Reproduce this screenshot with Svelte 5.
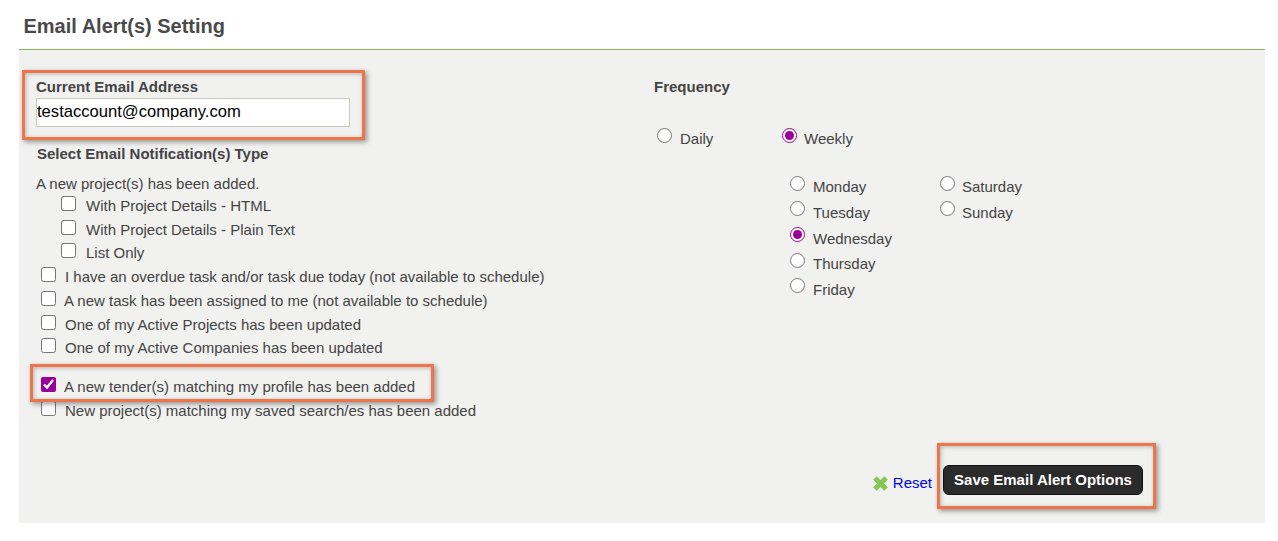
<script>
  const notifications = [
    { text: 'With Project Details - HTML', nested: true, gap: 0 },
    { text: 'With Project Details - Plain Text', nested: true, gap: 0 },
    { text: 'List Only', nested: true, gap: -1 },
    { text: 'I have an overdue task and/or task due today (not available to schedule)', gap: 0 },
    { text: 'A new task has been assigned to me (not available to schedule)', gap: 0, tight: true },
    { text: 'One of my Active Projects has been updated', gap: 0 },
    { text: 'One of my Active Companies has been updated', gap: -1 },
    { text: 'A new tender(s) matching my profile has been added', checked: true, gap: 15, tight: true },
    { text: 'New project(s) matching my saved search/es has been added', gap: 0 }
  ];
  const daysA = ['Monday', 'Tuesday', 'Wednesday', 'Thursday', 'Friday'];
  const daysB = ['Saturday', 'Sunday'];
</script>

<main class="page">
  <h1>Email Alert(s) Setting</h1>
  <section class="panel">
    <div class="left">
      <label class="strong" for="email">Current Email Address</label>
      <input id="email" type="text" value="testaccount@company.com" />
      <h2>Select Email Notification(s) Type</h2>
      <p class="lead">A new project(s) has been added.</p>
      <ul>
        {#each notifications as n}
          <li class:nested={n.nested} class:tight={n.tight} style="margin-top: {n.gap}px">
            <input type="checkbox" checked={n.checked} />
            <span>{n.text}</span>
          </li>
        {/each}
      </ul>
    </div>

    <div class="right">
      <div class="strong">Frequency</div>
      <div class="freq">
        <label class="opt daily"><input type="radio" name="freq" /><span>Daily</span></label>
        <label class="opt weekly"><input type="radio" name="freq" checked /><span>Weekly</span></label>
      </div>
      <div class="days">
        <div class="col">
          {#each daysA as d}
            <label class="opt"><input type="radio" name="day" checked={d === 'Wednesday'} /><span>{d}</span></label>
          {/each}
        </div>
        <div class="col second">
          {#each daysB as d}
            <label class="opt"><input type="radio" name="day2" /><span>{d}</span></label>
          {/each}
        </div>
      </div>
    </div>

    <div class="actions">
      <svg class="x" viewBox="0 0 14 14" width="15" height="15" aria-hidden="true">
        <path d="M0.6 3.4 3.4 0.6 7 4 10.6 0.6 13.4 3.4 10 7 13.4 10.6 10.6 13.4 7 10 3.4 13.4 0.6 10.6 4 7Z" fill="#86c654" stroke="#7ab84a" stroke-width="0.6" stroke-linejoin="round" />
      </svg>
      <a href="#reset">Reset</a>
      <button type="button">Save Email Alert Options</button>
    </div>

    <div class="mark m1"></div>
    <div class="mark m2"></div>
    <div class="mark m3"></div>
  </section>
</main>

<style>
  :global(body) {
    margin: 0;
    background: #fff;
  }
  .page {
    width: 1246px;
    margin-left: 19px;
    font-family: "Liberation Sans", Arial, sans-serif;
    color: #444;
    font-size: 15px;
  }
  h1 {
    margin: 0;
    height: 50px;
    box-sizing: border-box;
    padding: 14px 0 0 4.5px;
    font-size: 20px;
    line-height: 24px;
    font-weight: bold;
    color: #4a4a4a;
    border-bottom: 1px solid #7dba5a;
  }
  .panel {
    position: relative;
    height: 473px;
    background: #f1f1ef;
    display: grid;
    grid-template-columns: 635px 1fr;
  }
  .left {
    padding: 28px 0 0 17px;
  }
  .strong {
    display: block;
    font-weight: bold;
    font-size: 15px;
    line-height: 17px;
    color: #444;
  }
  #email {
    display: block;
    box-sizing: border-box;
    width: 314px;
    height: 29px;
    margin-top: 3px;
    padding: 0 0 2px;
    border: 1px solid #c8c8c0;
    background: #fff;
    color: #000;
    font: 16.6px "Liberation Sans", Arial, sans-serif;
    border-radius: 0;
  }
  h2 {
    margin: 18px 0 0 1px;
    font-size: 15px;
    line-height: 17px;
    font-weight: bold;
    color: #444;
  }
  .lead {
    margin: 13px 0 0;
    line-height: 17px;
  }
  ul {
    list-style: none;
    margin: -1px 0 0;
    padding: 0;
  }
  li {
    display: flex;
    align-items: center;
    height: 24px;
    padding-left: 5px;
    gap: 9px;
  }
  li.nested {
    padding-left: 25px;
    gap: 10px;
  }
  li.tight {
    gap: 8px;
  }
  li span {
    position: relative;
    top: 2px;
  }
  input[type="checkbox"],
  input[type="radio"] {
    width: 15px;
    height: 15px;
    margin: 0;
    flex: none;
    accent-color: #990099;
  }
  .right {
    padding: 28px 0 0 0;
  }
  .opt {
    display: flex;
    align-items: center;
    gap: 8px;
    height: 25.6px;
  }
  .opt span {
    position: relative;
    top: 3.5px;
  }
  .freq {
    display: flex;
    margin: 28px 0 0 3px;
  }
  .freq .opt span {
    top: 2.5px;
  }
  .freq .daily {
    width: 125px;
  }
  .freq .weekly {
    gap: 7px;
  }
  .days {
    display: flex;
    margin: 22px 0 0 136px;
  }
  .col {
    width: 150px;
  }
  .second .opt {
    gap: 7px;
  }
  .actions {
    position: absolute;
    right: 122px;
    top: 415px;
    display: flex;
    align-items: center;
  }
  .x {
    margin-right: 5px;
    margin-top: 6px;
  }
  a {
    color: #0000ee;
    text-decoration: none;
    margin-right: 11px;
    margin-top: 4px;
  }
  button {
    box-sizing: border-box;
    width: 200px;
    height: 30px;
    border: 1px solid #111;
    border-radius: 6px;
    background: #2b2b2b;
    color: #fff;
    font: bold 15px "Liberation Sans", Arial, sans-serif;
    padding: 0 0 2px;
  }
  .mark {
    position: absolute;
    box-sizing: border-box;
    border: 3px solid #ee7449;
    box-shadow: 2px 2px 5px rgba(0, 0, 0, 0.4), inset 1px 1px 4px rgba(0, 0, 0, 0.25);
    pointer-events: none;
  }
  .m1 {
    left: 3px;
    top: 20px;
    width: 343px;
    height: 70px;
  }
  .m2 {
    left: 11px;
    top: 314px;
    width: 404px;
    height: 38px;
  }
  .m3 {
    left: 918px;
    top: 393px;
    width: 219px;
    height: 66px;
  }
</style>
